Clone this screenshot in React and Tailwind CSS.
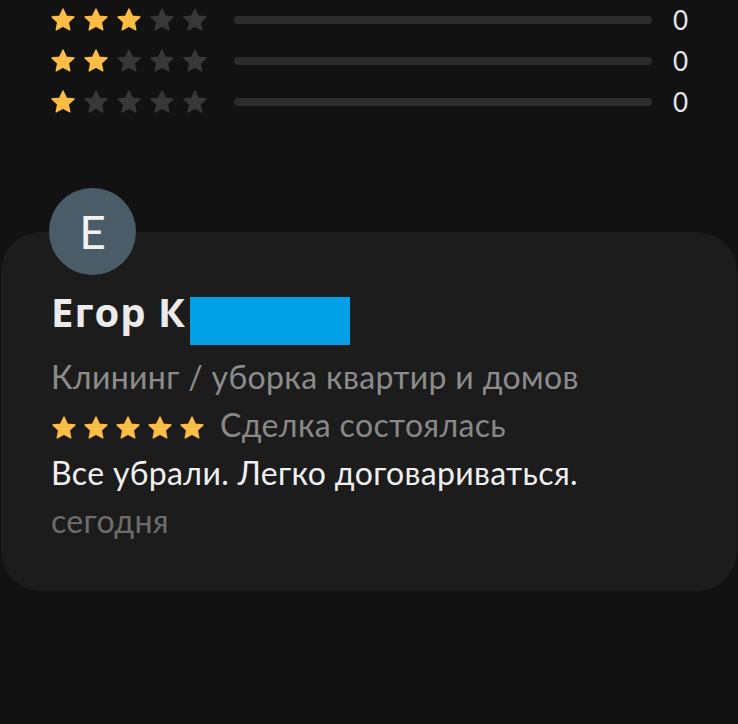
import React from "react";

function Star({ filled, size = 26 }) {
  return (
    <svg width={size} height={size} viewBox="0 0 24 24" className="shrink-0">
      <path
        d="M12 1.8l3.05 6.55 7.15.85-5.28 4.9 1.4 7.08L12 17.65 5.68 21.18l1.4-7.08L1.8 9.2l7.15-.85z"
        fill={filled ? "#fbbd45" : "#383838"}
        stroke={filled ? "#fbbd45" : "#383838"}
        strokeWidth="1.2"
        strokeLinejoin="round"
      />
    </svg>
  );
}

function RatingRow({ n }) {
  return (
    <div className="flex items-center h-[41px]">
      <div className="flex gap-[7px] w-[184px]">
        {[0, 1, 2, 3, 4].map((i) => (
          <Star key={i} filled={i < n} />
        ))}
      </div>
      <div className="w-[418px] h-[8px] rounded-full bg-[#2c2c2c]" />
      <div className="ml-[21px] text-[26px] leading-none text-[#e6e6e6]">0</div>
    </div>
  );
}

export default function App() {
  return (
    <div
      className="w-[738px] h-[724px] bg-[#121212] overflow-hidden"
      style={{ fontFamily: "Lato, 'Noto Sans', sans-serif" }}
    >
      <div className="pl-[50px] -mt-[1px]">
        <RatingRow n={3} />
        <RatingRow n={2} />
        <RatingRow n={1} />
      </div>
      <div className="mt-[110px] mx-[1px] rounded-[40px] bg-[#1d1c1c] h-[359px] pl-[48px] flex flex-col items-start">
        <div className="-mt-[44px] w-[87px] h-[87px] rounded-full bg-[#4a5c68] flex items-center justify-center text-[46px] leading-none text-[#f2f2f2]">
          E
        </div>
        <div className="mt-[14px] pl-[2px]">
          <div className="flex items-start h-[46px]">
            <span
              className="w-[139px] whitespace-nowrap text-[40px] tracking-[1px] font-bold text-[#ebebeb] leading-[46px]"
              style={{ fontFamily: "'Open Sans', 'Noto Sans', sans-serif" }}
            >
              Егор К
            </span>
            <span className="mt-[8px] w-[160px] h-[48px] bg-[#00a0e6]" />
          </div>
          <div className="mt-[18px] text-[32px] tracking-[0.35px] leading-[48px] text-[#8c8c8c]">
            Клининг / уборка квартир и домов
          </div>
          <div className="flex items-center h-[48px]">
            <div className="flex gap-[6px] mt-[5px]">
              {[0, 1, 2, 3, 4].map((i) => (
                <Star key={i} filled size={26} />
              ))}
            </div>
            <span className="ml-[15px] text-[32px] tracking-[0.35px] leading-[48px] text-[#888888]">
              Сделка состоялась
            </span>
          </div>
          <div className="text-[32px] tracking-[0.35px] leading-[48px] text-[#f0f0f0]">
            Все убрали. Легко договариваться.
          </div>
          <div className="text-[32px] tracking-[0.35px] leading-[48px] text-[#6c6c6c]">сегодня</div>
        </div>
      </div>
    </div>
  );
}
